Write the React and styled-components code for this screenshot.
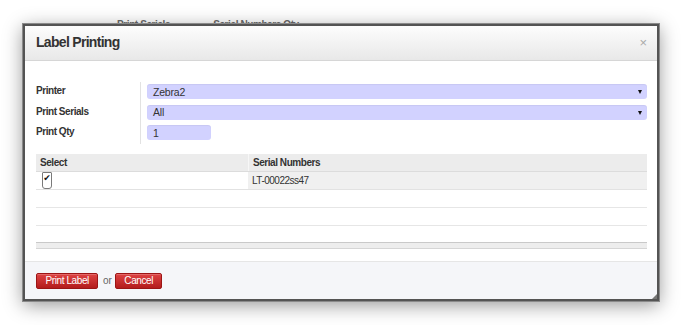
import React from "react";
import styled, { createGlobalStyle } from "styled-components";

const Global = createGlobalStyle`
  html, body { margin: 0; padding: 0; background: #ffffff; }
  body { font-family: "Liberation Sans", Arial, sans-serif; font-size: 10px; color: #333; }
  * { box-sizing: border-box; }
`;

const Page = styled.div`
  width: 682px;
  height: 325px;
  overflow: hidden;
  background: #fff;
`;

const Behind = styled.div`
  height: 24px;
  overflow: hidden;
  display: flex;
  gap: 43px;
  padding: 18px 0 0 117px;
  color: #6a6a6a;
  font-size: 10px;
  letter-spacing: -0.4px;
  line-height: 13px;
  font-weight: bold;
`;

const Dialog = styled.div`
  position: relative;
  margin-left: 23px;
  width: 636px;
  border: 2px solid #545454;
  box-shadow: 0 0 0 1px #8a8a8a, 0 4px 18px rgba(0, 0, 0, 0.42);
  background: #fff;
  display: flex;
  flex-direction: column;
`;

const Header = styled.div`
  height: 35px;
  display: flex;
  align-items: center;
  justify-content: space-between;
  padding: 0 10px 2px 11px;
  background: linear-gradient(#fdfdfd, #e8e8e8);
  border-bottom: 1px solid #d6d6d6;
`;

const Title = styled.div`
  font-size: 14px;
  font-weight: bold;
  letter-spacing: -0.7px;
  color: #333;
`;

const Close = styled.span`
  font-size: 13px;
  color: #aaa;
`;

const Body = styled.div`
  padding: 21px 10px 12px 11px;
`;

const Form = styled.div`
  display: grid;
  grid-template-columns: 105px 1fr;
  grid-auto-rows: 20.5px;
`;

const Label = styled.div`
  border-right: 1px solid #e2e2e2;
  font-weight: bold;
  font-size: 10px;
  letter-spacing: -0.45px;
  line-height: 15px;
  padding-top: 1px;
  color: #333;
`;

const FieldCell = styled.div`
  padding: 2px 0 0 6px;
`;

const Input = styled.div`
  height: 15px;
  width: ${(p) => p.$w || "100%"};
  background: #d2d2ff;
  border-radius: 3px;
  box-shadow: inset 0 1px 1px rgba(0, 0, 0, 0.05);
  display: flex;
  align-items: center;
  justify-content: space-between;
  padding: 0 5px 0 6px;
  font-size: 10.5px;
  letter-spacing: -0.2px;
  color: #333;
`;

const Caret = styled.span`
  width: 0;
  height: 0;
  border-left: 2.5px solid transparent;
  border-right: 2.5px solid transparent;
  border-top: 4px solid #111;
  margin-top: 1px;
`;

const Table = styled.div`
  margin-top: 10.5px;
  display: flex;
  flex-direction: column;
`;

const Row = styled.div`
  display: grid;
  grid-template-columns: 212px 1fr;
  height: 18px;
  border-bottom: 1px solid ${(p) => p.$line || "#e4e4e4"};
  background: ${(p) => p.$bg || "transparent"};
`;

const Cell = styled.div`
  display: flex;
  align-items: center;
  padding-left: 4px;
  font-size: 10px;
  font-weight: ${(p) => (p.$head ? "bold" : "normal")};
  letter-spacing: ${(p) => (p.$head ? "-0.45px" : "-0.5px")};
  background: ${(p) => p.$bg || "transparent"};
  border-left: ${(p) => (p.$divider ? "1px solid #f7f7f7" : "none")};
  color: #333;
`;

const EmptyRow = styled.div`
  height: ${(p) => p.$h || 18}px;
  border-bottom: ${(p) => (p.$noline ? "none" : "1px solid #e6e6e6")};
`;

const TableFoot = styled.div`
  height: 7px;
  border-top: 1px solid #c9c9c9;
  border-bottom: 1px solid #d5d5d5;
  background: #ededed;
`;

const Check = styled.span`
  margin-left: 2px;
  width: 10px;
  height: 17px;
  border: 1px solid #7a7a7a;
  border-radius: 1px 1px 3px 3px;
  background: #fff;
  display: flex;
  justify-content: center;
  font-size: 9px;
  line-height: 11px;
  letter-spacing: 0;
  color: #111;
  font-family: "DejaVu Sans", sans-serif;
`;

const Footer = styled.div`
  height: 38px;
  border-top: 1px solid #e6e6e6;
  background: #f5f6f9;
  display: flex;
  align-items: flex-start;
  padding: 11px 0 0 11px;
`;

const Button = styled.button`
  height: 16px;
  padding: 0 8px 0 8.5px;
  border: 1px solid #9c1515;
  border-radius: 2px;
  background: linear-gradient(#de4343, #b31c1c);
  box-shadow: inset 0 1px 0 rgba(255, 255, 255, 0.2);
  color: #fff;
  font-family: "Liberation Sans", Arial, sans-serif;
  font-size: 10px;
  letter-spacing: -0.4px;
  line-height: 14px;
  cursor: pointer;
`;

const Or = styled.span`
  color: #666;
  line-height: 16px;
  font-size: 10px;
  margin: 0 3px 0 5px;
`;

const Grip = styled.svg`
  position: absolute;
  right: 0;
  bottom: 0;
`;

export default function App() {
  return (
    <Page>
      <Global />
      <Behind>
        <span>Print Serials</span>
        <span>Serial Numbers Qty</span>
      </Behind>
      <Dialog>
        <Header>
          <Title>Label Printing</Title>
          <Close>×</Close>
        </Header>
        <Body>
          <Form>
            <Label>Printer</Label>
            <FieldCell>
              <Input>
                <span>Zebra2</span>
                <Caret />
              </Input>
            </FieldCell>
            <Label>Print Serials</Label>
            <FieldCell>
              <Input>
                <span>All</span>
                <Caret />
              </Input>
            </FieldCell>
            <Label>Print Qty</Label>
            <FieldCell>
              <Input $w="64px">
                <span>1</span>
              </Input>
            </FieldCell>
          </Form>
          <Table>
            <Row $bg="#ececec" $line="#dcdcdc">
              <Cell $head>Select</Cell>
              <Cell $head $divider>Serial Numbers</Cell>
            </Row>
            <Row $line="#e2e2e2">
              <Cell>
                <Check>✔</Check>
              </Cell>
              <Cell $bg="#f0f0f0">LT-00022ss47</Cell>
            </Row>
            <EmptyRow />
            <EmptyRow />
            <EmptyRow $h={16} $noline />
            <TableFoot />
          </Table>
        </Body>
        <Footer>
          <Button>Print Label</Button>
          <Or>or</Or>
          <Button>Cancel</Button>
        </Footer>
        <Grip width="5" height="5" viewBox="0 0 5 5">
          <path d="M5 0 L5 5 L0 5 Z" fill="#777" />
        </Grip>
      </Dialog>
    </Page>
  );
}
